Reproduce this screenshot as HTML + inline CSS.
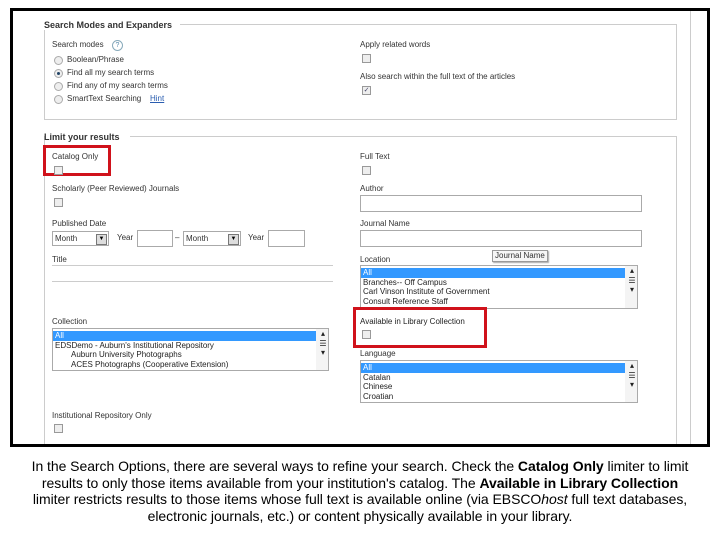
<!DOCTYPE html>
<html><head><style>
body{margin:0;width:720px;height:540px;background:#fff;position:relative;font-family:"Liberation Sans",sans-serif;overflow:hidden}
.frame{position:absolute;left:10px;top:8px;width:694px;height:433px;border:3px solid #000;background:#fff;overflow:hidden}
.a{position:absolute;font-size:8px;color:#333;white-space:nowrap;line-height:10px}
.b{font-weight:bold}
.fs{position:absolute;border:1px solid #ccc}
.cb{position:absolute;width:7px;height:7px;border:1px solid #999;background:#eee}
.rd{position:absolute;width:7px;height:7px;border:1px solid #aaa;border-radius:50%;background:#eee}
.in{position:absolute;border:1px solid #aaa;background:#fff;box-sizing:border-box}
.red{position:absolute;border:3px solid #d0121b;box-sizing:border-box}
.list{position:absolute;border:1px solid #aaa;background:#fff;box-sizing:border-box;overflow:hidden}
.list div{font-size:8px;line-height:9.5px;color:#222;padding-left:2px;white-space:nowrap}
.list .sel{background:#3399ff;color:#fff;margin-right:12px}
.sb{position:absolute;right:0;top:0;bottom:0;width:10px;background:#f4f4f4;font-size:6px;color:#555;text-align:center}
.cap{position:absolute;left:0;width:720px;text-align:center;font-size:14px;letter-spacing:-0.05px;white-space:nowrap;color:#000;line-height:16px}
</style></head><body>
<div class="frame">
<div style="position:absolute;left:-13px;top:-11px;width:720px;height:540px">
<!-- section 1 -->
<div class="fs" style="left:44px;top:24px;width:631px;height:95px;border-top:none"></div>
<div style="position:absolute;left:180px;top:24px;width:496px;border-top:1px solid #ccc"></div>
<div class="a b" style="left:44px;top:20px;font-size:9px;background:#fff;padding-right:4px;color:#333">Search Modes and Expanders</div>
<div class="a" style="left:52px;top:40px">Search modes</div>
<div style="position:absolute;left:112px;top:40px;width:9px;height:9px;border:1px solid #8ab;border-radius:50%;font-size:7px;text-align:center;line-height:9px;color:#58a">?</div>
<div class="rd" style="left:54px;top:56px"></div><div class="a" style="left:67px;top:55px">Boolean/Phrase</div>
<div class="rd" style="left:54px;top:69px"><div style="margin:2px;width:3px;height:3px;border-radius:50%;background:#246"></div></div><div class="a" style="left:67px;top:68px">Find all my search terms</div>
<div class="rd" style="left:54px;top:82px"></div><div class="a" style="left:67px;top:81px">Find any of my search terms</div>
<div class="rd" style="left:54px;top:95px"></div><div class="a" style="left:67px;top:94px">SmartText Searching</div>
<div class="a" style="left:150px;top:94px;color:#2a5db0;text-decoration:underline">Hint</div>
<div class="a" style="left:360px;top:40px">Apply related words</div>
<div class="cb" style="left:362px;top:54px"></div>
<div class="a" style="left:360px;top:72px">Also search within the full text of the articles</div>
<div class="cb" style="left:362px;top:86px;font-size:7px;line-height:7px;text-align:center;color:#446">✓</div>
<!-- section 2 -->
<div class="fs" style="left:44px;top:136px;width:631px;height:320px;border-top:none"></div>
<div style="position:absolute;left:130px;top:136px;width:546px;border-top:1px solid #ccc"></div>
<div style="position:absolute;left:690px;top:0;height:450px;border-left:1px solid #ccc"></div>
<div class="a b" style="left:44px;top:132px;font-size:9px">Limit your results</div>
<div class="red" style="left:43px;top:145px;width:68px;height:31px"></div>
<div class="a" style="left:52px;top:152px">Catalog Only</div>
<div class="cb" style="left:54px;top:166px"></div>
<div class="a" style="left:52px;top:184px">Scholarly (Peer Reviewed) Journals</div>
<div class="cb" style="left:54px;top:198px"></div>
<div class="a" style="left:52px;top:219px">Published Date</div>
<div class="in" style="left:52px;top:231px;width:57px;height:15px"><span class="a" style="left:2px;top:2px">Month</span><div style="position:absolute;right:1px;top:2px;width:9px;height:9px;border:1px solid #777;background:#ddd;font-size:6px;text-align:center;line-height:9px">▼</div></div>
<div class="a" style="left:117px;top:233px">Year</div>
<div class="in" style="left:137px;top:230px;width:36px;height:17px"></div>
<div class="a" style="left:175px;top:233px">–</div>
<div class="in" style="left:183px;top:231px;width:58px;height:15px"><span class="a" style="left:2px;top:2px">Month</span><div style="position:absolute;right:1px;top:2px;width:9px;height:9px;border:1px solid #777;background:#ddd;font-size:6px;text-align:center;line-height:9px">▼</div></div>
<div class="a" style="left:248px;top:233px">Year</div>
<div class="in" style="left:268px;top:230px;width:37px;height:17px"></div>
<div class="a" style="left:52px;top:255px">Title</div>
<div style="position:absolute;left:52px;top:265px;width:281px;border-top:1px solid #ccc"></div>
<div style="position:absolute;left:52px;top:281px;width:281px;border-top:1px solid #ccc"></div>
<div class="a" style="left:52px;top:317px">Collection</div>
<div class="list" style="left:52px;top:328px;width:277px;height:43px;padding-top:2px"><div class="sel">All</div><div>EDSDemo - Auburn's Institutional Repository</div><div style="padding-left:18px">Auburn University Photographs</div><div style="padding-left:18px">ACES Photographs (Cooperative Extension)</div><div class="sb">▴<br>☰<br>▾</div></div>
<div class="a" style="left:52px;top:411px">Institutional Repository Only</div>
<div class="cb" style="left:54px;top:424px"></div>
<!-- right col -->
<div class="a" style="left:360px;top:152px">Full Text</div>
<div class="cb" style="left:362px;top:166px"></div>
<div class="a" style="left:360px;top:184px">Author</div>
<div class="in" style="left:360px;top:195px;width:282px;height:17px"></div>
<div class="a" style="left:360px;top:219px">Journal Name</div>
<div class="in" style="left:360px;top:230px;width:282px;height:17px"></div>
<div class="a" style="left:492px;top:250px;border:1px solid #999;background:#f6f6f6;padding:0 2px;box-shadow:1px 1px 1px #aaa">Journal Name</div>
<div class="a" style="left:360px;top:255px">Location</div>
<div class="list" style="left:360px;top:265px;width:278px;height:44px;padding-top:2px"><div class="sel">All</div><div>Branches-- Off Campus</div><div>Carl Vinson Institute of Government</div><div>Consult Reference Staff</div><div class="sb">▴<br>☰<br>▾</div></div>
<div class="red" style="left:353px;top:307px;width:134px;height:41px"></div>
<div class="a" style="left:360px;top:317px;color:#222">Available in Library Collection</div>
<div class="cb" style="left:362px;top:330px"></div>
<div class="a" style="left:360px;top:349px">Language</div>
<div class="list" style="left:360px;top:360px;width:278px;height:43px;padding-top:2px"><div class="sel">All</div><div>Catalan</div><div>Chinese</div><div>Croatian</div><div class="sb">▴<br>☰<br>▾</div></div>
</div>
</div>
<div class="cap" style="top:458px">In the Search Options, there are several ways to refine your search. Check the <b>Catalog Only</b> limiter to limit</div>
<div class="cap" style="top:475px">results to only those items available from your institution's catalog. The <b>Available in Library Collection</b></div>
<div class="cap" style="top:491px">limiter restricts results to those items whose full text is available online (via EBSCO<i>host</i> full text databases,</div>
<div class="cap" style="top:508px">electronic journals, etc.) or content physically available in your library.</div>
</body></html>
